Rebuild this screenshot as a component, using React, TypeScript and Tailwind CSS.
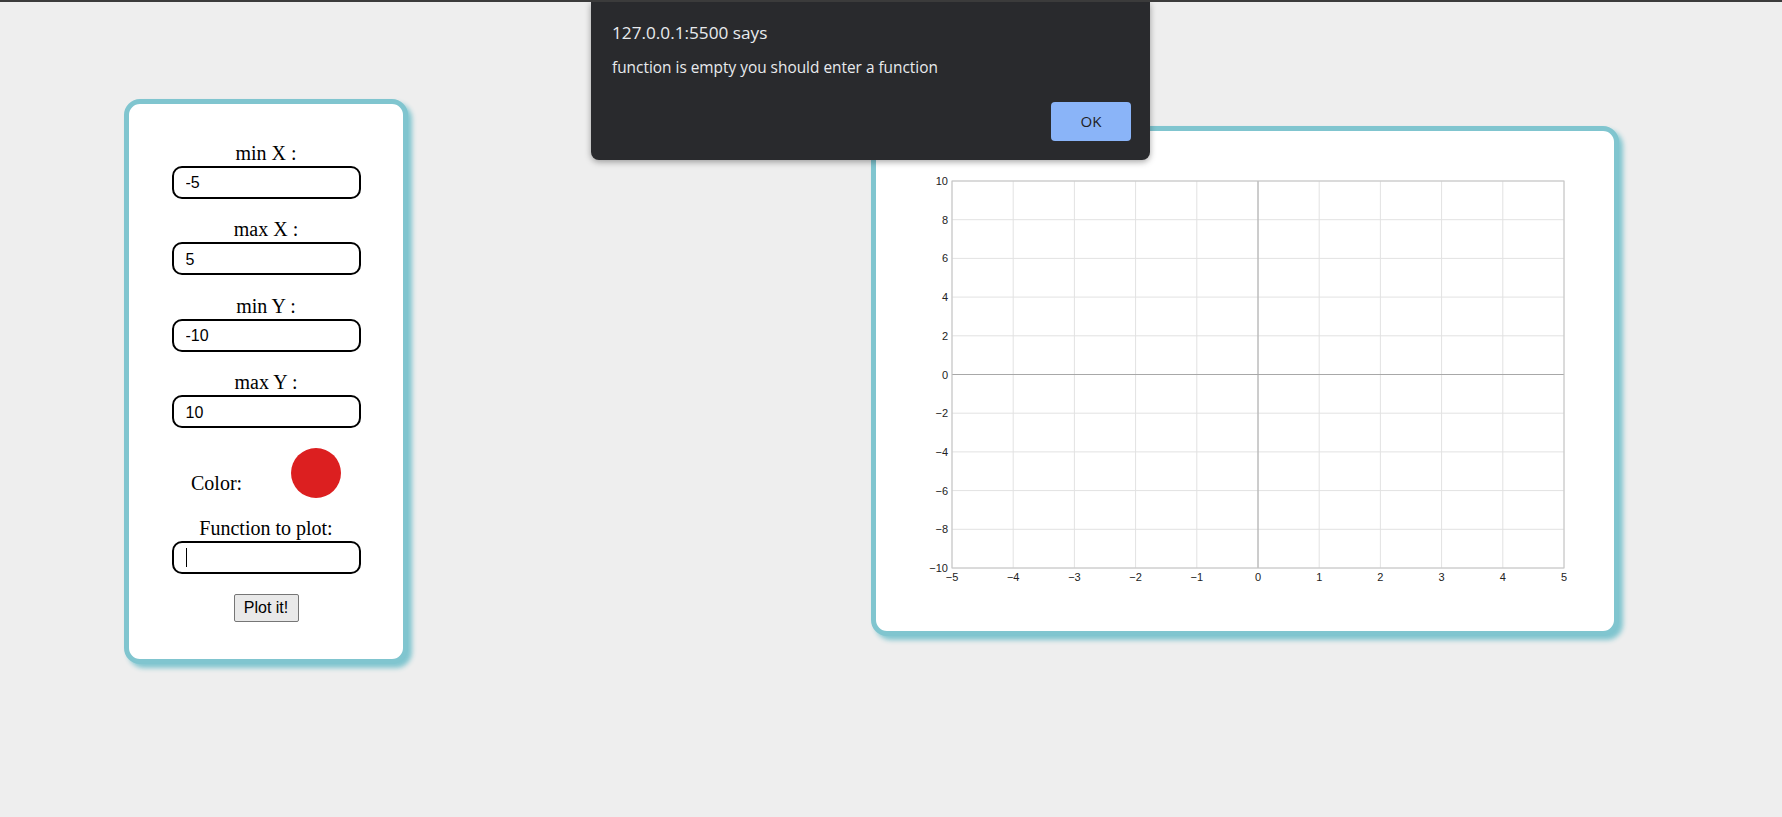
import React from "react";

const X0 = 76;
const X1 = 688;
const Y0 = 50;
const Y1 = 437;

const xTicks = [-5, -4, -3, -2, -1, 0, 1, 2, 3, 4, 5];
const yTicks = [-10, -8, -6, -4, -2, 0, 2, 4, 6, 8, 10];

const sx = (v: number) => X0 + ((v + 5) / 10) * (X1 - X0);
const sy = (v: number) => Y0 + ((10 - v) / 20) * (Y1 - Y0);
const fmt = (v: number) => (v < 0 ? "\u2212" + Math.abs(v) : String(v));

const Field = ({ label, value }: { label: string; value: string }) => (
  <div className="flex flex-col items-center">
    <label className="text-[20px] leading-[22px] text-black">{label}</label>
    <input
      defaultValue={value}
      className="mt-[2px] w-[189px] h-[33px] border-2 border-black rounded-[10px] pl-3 pt-[2px] text-[16px] text-black bg-white outline-none font-['Liberation_Sans',Arial,sans-serif]"
    />
  </div>
);

const Chart = () => (
  <svg width="738" height="500" className="block">
    {xTicks.map((t) => (
      <line key={"gx" + t} x1={sx(t)} x2={sx(t)} y1={Y0} y2={Y1} stroke="#e2e2e2" strokeWidth="1" />
    ))}
    {yTicks.map((t) => (
      <line key={"gy" + t} x1={X0} x2={X1} y1={sy(t)} y2={sy(t)} stroke="#e2e2e2" strokeWidth="1" />
    ))}
    <line x1={sx(0)} x2={sx(0)} y1={Y0} y2={Y1} stroke="#a8a8a8" strokeWidth="1" />
    <line x1={X0} x2={X1} y1={sy(0)} y2={sy(0)} stroke="#a8a8a8" strokeWidth="1" />
    <rect x={X0} y={Y0} width={X1 - X0} height={Y1 - Y0} fill="none" stroke="#c4c4c4" strokeWidth="1" />
    {yTicks.map((t) => (
      <text
        key={"ly" + t}
        x={X0 - 4}
        y={sy(t) + 4}
        textAnchor="end"
        fontSize="11"
        fill="#222"
        fontFamily="Liberation Sans, Arial, sans-serif"
      >
        {fmt(t)}
      </text>
    ))}
    {xTicks.map((t) => (
      <text
        key={"lx" + t}
        x={sx(t)}
        y={Y1 + 13}
        textAnchor="middle"
        fontSize="11"
        fill="#222"
        fontFamily="Liberation Sans, Arial, sans-serif"
      >
        {fmt(t)}
      </text>
    ))}
  </svg>
);

export default function App() {
  return (
    <div className="relative w-[1782px] h-[817px] bg-[#eeeeee] border-t-2 border-[#3b3b3b] font-['Liberation_Serif','Times_New_Roman',serif] overflow-hidden">
      <div className="flex items-center h-[758px]">
        {/* controls */}
        <div className="ml-[124px] w-[284px] h-[565px] bg-white border-[5px] border-[#80c5cf] rounded-[16px] shadow-[4px_4px_5px_#80c5cf] flex flex-col pt-[38px]">
          <div className="flex flex-col gap-[19.5px]">
            <Field label="min X :" value="-5" />
            <Field label="max X :" value="5" />
            <Field label="min Y :" value="-10" />
            <Field label="max Y :" value="10" />
            <div className="flex items-end h-[50px]">
              <label className="w-[100px] ml-[62px] mb-[4px] text-[20px] leading-[22px] text-black">Color:</label>
              <div className="w-[50px] h-[50px] rounded-full bg-[#dc1f20]" />
            </div>
            <div className="flex flex-col items-center">
              <label className="text-[20px] leading-[22px] text-black">Function to plot:</label>
              <div className="relative mt-[2px]">
                <input className="w-[189px] h-[33px] border-2 border-black rounded-[10px] pl-3 text-[16px] bg-white outline-none caret-transparent font-['Liberation_Sans',Arial,sans-serif]" />
                <span className="absolute left-[14px] top-[7px] w-px h-[19px] bg-black" />
              </div>
            </div>
            <div className="flex justify-center">
              <button className="w-[65px] h-[28px] bg-[#e9e9e9] border border-[#767676] rounded-[2px] text-[16px] text-black font-['Liberation_Sans',Arial,sans-serif]">
                Plot it!
              </button>
            </div>
          </div>
        </div>

        {/* plot */}
        <div className="ml-[463px] w-[748px] h-[510px] bg-white border-[5px] border-[#80c5cf] rounded-[16px] shadow-[4px_4px_5px_#80c5cf] overflow-hidden">
          <Chart />
        </div>
      </div>

      {/* alert */}
      <div className="absolute top-0 left-[591px] w-[559px] h-[158px] bg-[#292a2d] rounded-b-[8px] shadow-[0_2px_6px_rgba(0,0,0,0.35)] font-['Open_Sans','Noto_Sans',sans-serif] flex flex-col">
        <div className="pl-[21px] pt-[19px] text-[17.2px] leading-[24px] text-[#e8eaed]">127.0.0.1:5500 says</div>
        <div className="pl-[21px] pt-[13px] text-[15.4px] leading-[20px] text-[#e8eaed]">function is empty you should enter a function</div>
        <div className="flex justify-end pr-[19px] mt-auto pb-[19px]">
          <button className="w-[80px] h-[39px] rounded-[4px] bg-[#8ab4f8] text-[15px] text-[#202124]">OK</button>
        </div>
      </div>
    </div>
  );
}
